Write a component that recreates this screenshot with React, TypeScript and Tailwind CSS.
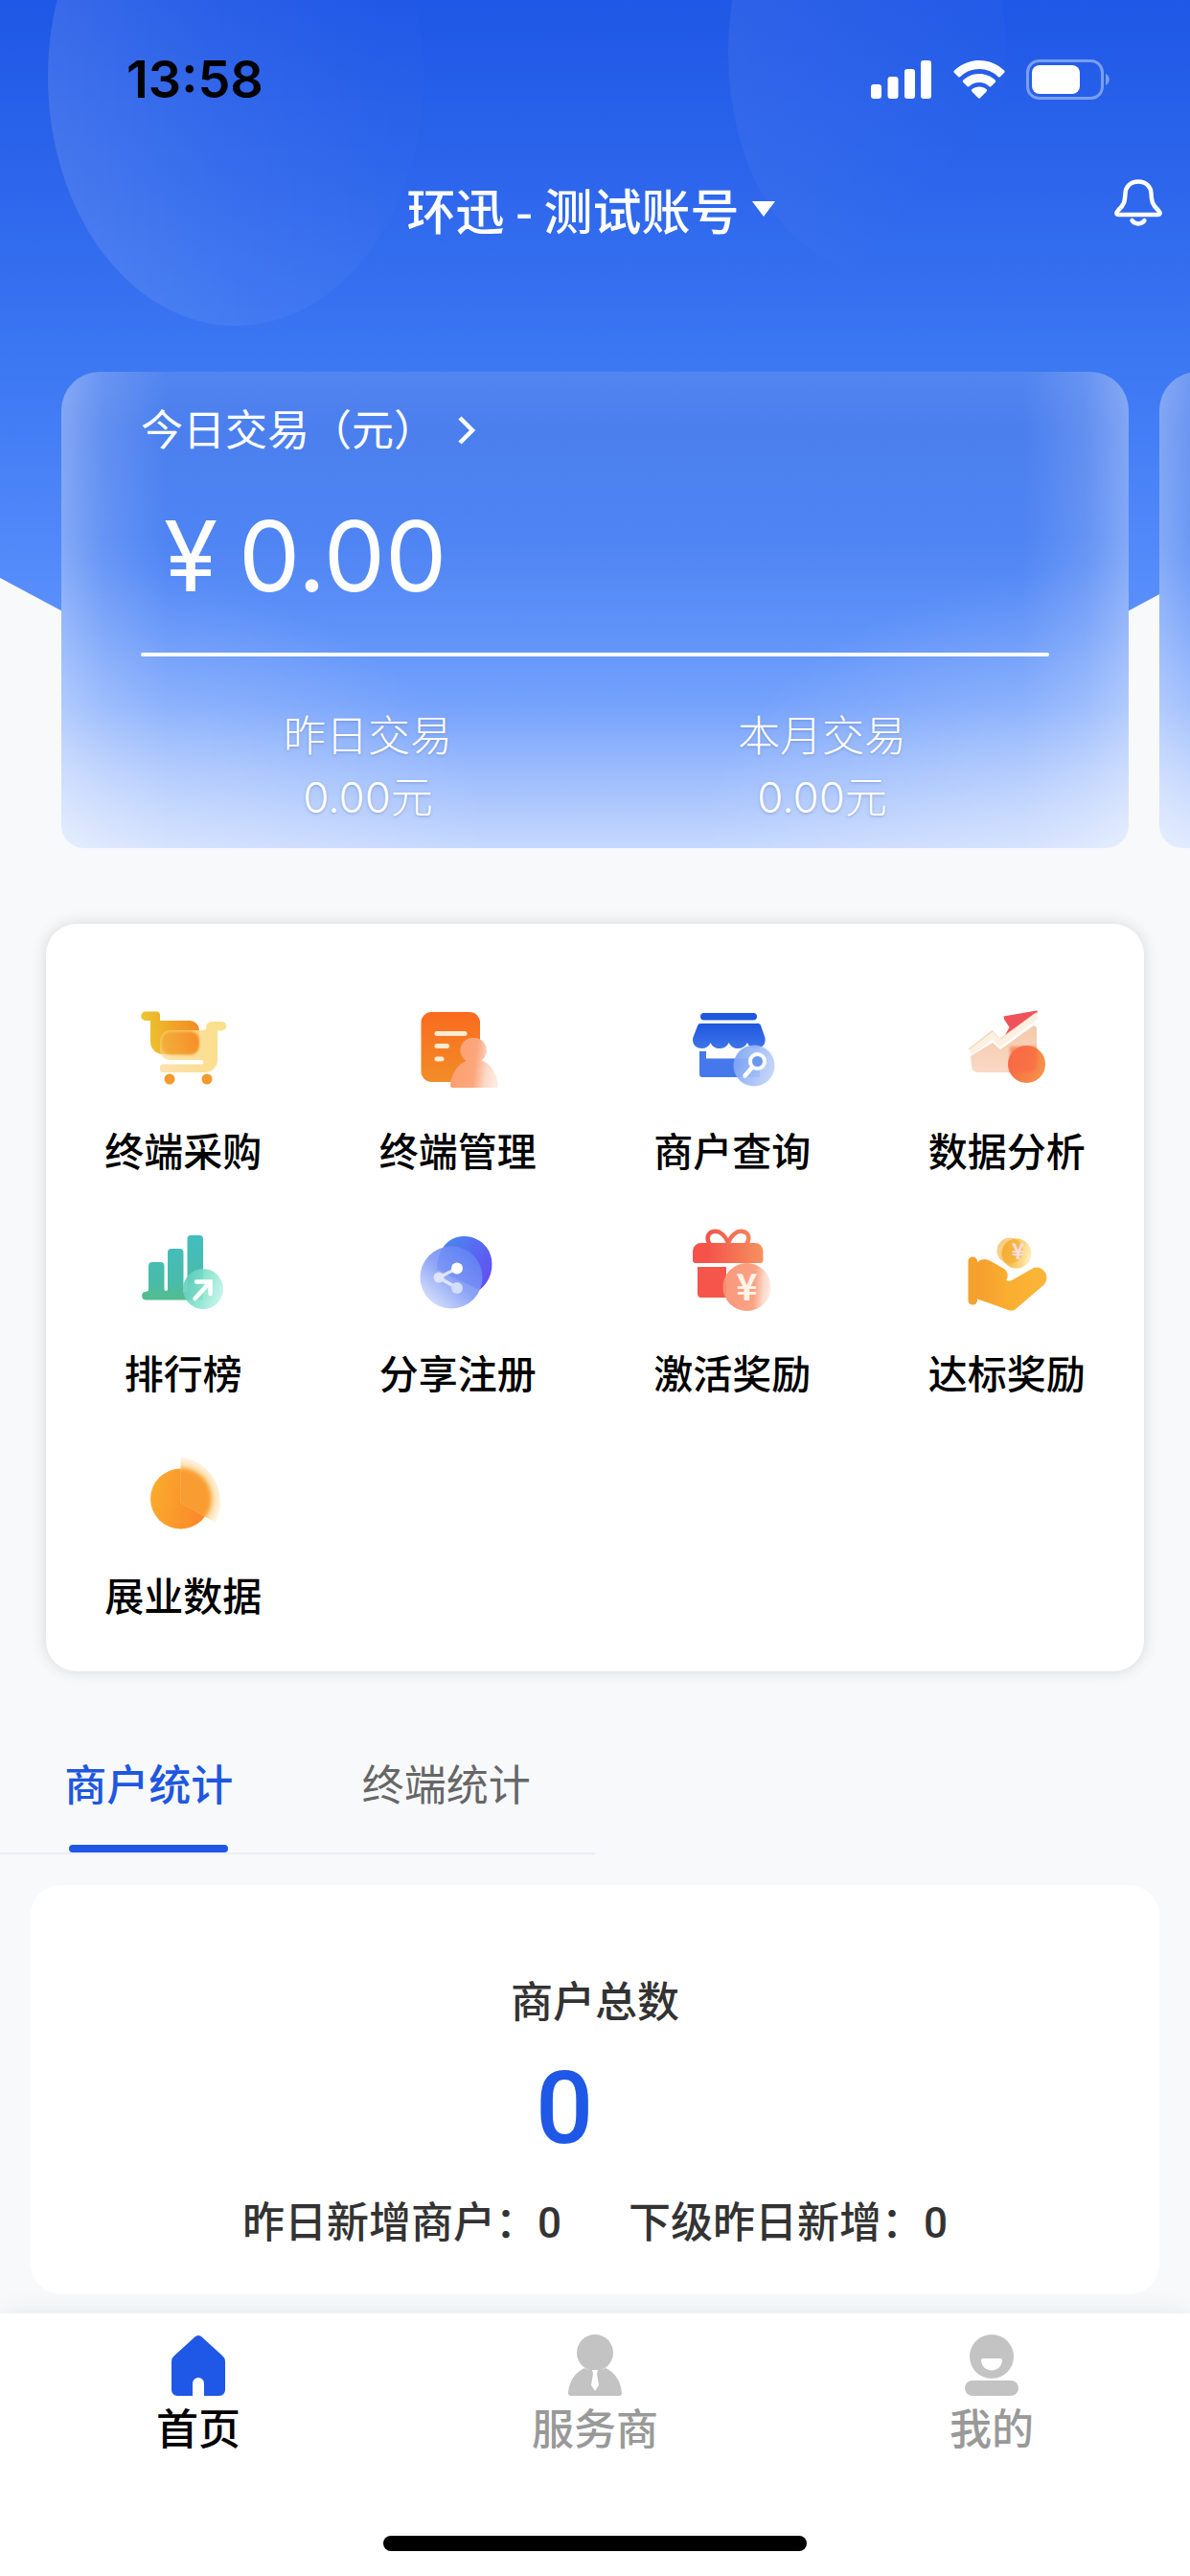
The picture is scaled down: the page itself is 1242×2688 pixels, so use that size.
import React from 'react'

function CartIcon() {
  return (
    <svg width="100" height="100" viewBox="0 0 100 100" fill="none" aria-hidden>
      <defs>
        <linearGradient id="cart-back" x1="16" y1="40" x2="68" y2="30" gradientUnits="userSpaceOnUse">
          <stop stopColor="#EDC02E" />
          <stop offset="1" stopColor="#F48A22" />
        </linearGradient>
        <linearGradient id="cart-front" x1="26" y1="40" x2="86" y2="40" gradientUnits="userSpaceOnUse">
          <stop stopColor="#FBD07A" stopOpacity="0.6" />
          <stop offset="1" stopColor="#FBDF8E" />
        </linearGradient>
        <linearGradient id="cart-blob" x1="28" y1="45" x2="66" y2="38" gradientUnits="userSpaceOnUse">
          <stop stopColor="#F3AE3A" />
          <stop offset="1" stopColor="#F68F28" />
        </linearGradient>
        <filter id="cart-blur" x="-20%" y="-20%" width="140%" height="140%">
          <feGaussianBlur stdDeviation="1.3" />
        </filter>
      </defs>
      <path d="M11 10.5h11a4 4 0 0 1 4 4V20h31a10 10 0 0 1 10 10v10a15 15 0 0 1-15 15H29a13 13 0 0 1-13-13V20h-5a4.7 4.7 0 0 1 0-9.500z" fill="url(#cart-back)" />
      <path d="M37 30h29.500c1 0 6.500 0 7.500-1v-2a6 6 0 0 1 6-6h10.500a4.700 4.700 0 0 1 0 9.500H86V61a13 13 0 0 1-13 13H28a3 3 0 0 1-2-2v-4a3 3 0 0 1 2-2.500h42a2.500 2.500 0 0 0 0-4.500H37A11 11 0 0 1 26 49v-8a11 11 0 0 1 11-11z" fill="url(#cart-front)" />
      <rect x="28" y="31.500" width="39" height="24" rx="9" fill="url(#cart-blob)" filter="url(#cart-blur)" />
      <circle cx="36" cy="81" r="5.500" fill="#F39A2C" />
      <circle cx="75" cy="81" r="5.500" fill="#F39A2C" />
    </svg>
  )
}

function TerminalIcon() {
  return (
    <svg width="100" height="100" viewBox="0 0 100 100" fill="none" aria-hidden>
      <defs>
        <linearGradient id="doc-fill" x1="42" y1="11" x2="42" y2="84" gradientUnits="userSpaceOnUse">
          <stop stopColor="#FA6B1E" />
          <stop offset="1" stopColor="#F18D28" />
        </linearGradient>
        <linearGradient id="doc-person" x1="42" y1="70" x2="92" y2="76" gradientUnits="userSpaceOnUse">
          <stop stopColor="#FDA070" />
          <stop offset="0.500" stopColor="#FCA67C" />
          <stop offset="0.750" stopColor="#FCD9C8" />
          <stop offset="1" stopColor="#FDEDE6" />
        </linearGradient>
      </defs>
      <rect x="11.500" y="11" width="61.500" height="73" rx="11" fill="url(#doc-fill)" />
      <path d="M28 33.500h29M28 46.500h10.500M28 60h5" stroke="#FFEBD2" strokeWidth="5" strokeLinecap="round" />
      <path d="M66.500 38a13 13 0 0 1 8 23.500C84 64 91 76 92 88a2 2 0 0 1-2 2H44a2 2 0 0 1-2-2c1-12 7-22 16.500-26A13 13 0 0 1 66.500 38z" fill="url(#doc-person)" />
    </svg>
  )
}

function StoreIcon() {
  return (
    <svg width="100" height="100" viewBox="0 0 100 100" fill="none" aria-hidden>
      <defs>
        <linearGradient id="store-awning" x1="46" y1="23" x2="46" y2="50" gradientUnits="userSpaceOnUse">
          <stop stopColor="#1F57DE" />
          <stop offset="1" stopColor="#3F75EA" />
        </linearGradient>
        <linearGradient id="store-lens" x1="52" y1="60" x2="95" y2="75" gradientUnits="userSpaceOnUse">
          <stop stopColor="#7FA6F4" />
          <stop offset="1" stopColor="#C3D4FA" />
        </linearGradient>
      </defs>
      <rect x="17" y="12" width="59" height="7.500" rx="3.700" fill="#1F57DE" />
      <path d="M17 23h60.500a3 3 0 0 1 2.500 2l4.500 13c1 7-3 11-9 11-4 0-8-2-9.500-6-2 4-5.500 6-9.500 6s-8-2-9.800-6c-2 4-5 6-9.500 6s-8-2-9.500-6c-2 4-5 6-9.500 6-6 0-10-4-9-11l5-13a3 3 0 0 1 2.800-2z" fill="url(#store-awning)" />
      <path d="M16 52h7v7.500h56V79H19a3 3 0 0 1-3-3z" fill="#4579EB" />
      <circle cx="73" cy="67" r="21.500" fill="url(#store-lens)" fillOpacity="0.920" />
      <circle cx="76.500" cy="62.500" r="7.500" stroke="#fff" strokeWidth="4" fill="#6C97F0" />
      <path d="M70 70l-6.500 7.500" stroke="#fff" strokeWidth="4.500" strokeLinecap="round" />
    </svg>
  )
}

function AnalysisIcon() {
  return (
    <svg width="100" height="100" viewBox="0 0 100 100" fill="none" aria-hidden>
      <defs>
        <linearGradient id="trend-body" x1="46" y1="25" x2="46" y2="74" gradientUnits="userSpaceOnUse">
          <stop stopColor="#F3C9A8" />
          <stop offset="1" stopColor="#FBD8C6" />
        </linearGradient>
        <linearGradient id="trend-dot" x1="52" y1="60" x2="90" y2="72" gradientUnits="userSpaceOnUse">
          <stop stopColor="#F9693F" />
          <stop offset="1" stopColor="#F5934A" />
        </linearGradient>
        <filter id="trend-blur" x="-20%" y="-20%" width="140%" height="140%">
          <feGaussianBlur stdDeviation="1.500" />
        </filter>
      </defs>
      <path d="M12 57l23-14 8 7 35-25 3 2v42a5 5 0 0 1-5 5H19a7 7 0 0 1-6-6z" fill="url(#trend-body)" />
      <path d="M46.500 15.500L81 9.500c1 0 1 2 0 3L46 38.500 52.500 27 47 18.500z" fill="#F0525A" />
      <path d="M10.500 50L34.500 31l8 9L81 12" stroke="#F6D9BF" strokeWidth="2" />
      <path d="M12 53L35 35.500l8 8.500 38-29" stroke="#FCF0E0" strokeWidth="6" />
      <circle cx="70.500" cy="65.500" r="19.500" fill="url(#trend-dot)" />
      <path d="M53 47h28v20a7 7 0 0 1-7 7H53z" fill="#F96A46" fillOpacity="0.650" filter="url(#trend-blur)" />
    </svg>
  )
}

function RankIcon() {
  return (
    <svg width="100" height="100" viewBox="0 0 100 100" fill="none" aria-hidden>
      <defs>
        <linearGradient id="rank-bars" x1="40" y1="12" x2="40" y2="80" gradientUnits="userSpaceOnUse">
          <stop stopColor="#41BEBF" />
          <stop offset="0.700" stopColor="#49BBAA" />
          <stop offset="1" stopColor="#52BE8C" />
        </linearGradient>
        <linearGradient id="rank-dot" x1="50" y1="60" x2="92" y2="75" gradientUnits="userSpaceOnUse">
          <stop stopColor="#5FCDB9" />
          <stop offset="0.500" stopColor="#86E2CE" />
          <stop offset="1" stopColor="#C4F5EA" />
        </linearGradient>
      </defs>
      <path d="M14 44a4 4 0 0 1 4-4h8.500a4 4 0 0 1 4 4v25a2 2 0 0 0 3.500 0V30a4 4 0 0 1 4-4h8.500a4 4 0 0 1 4 4v41h4V16a4 4 0 0 1 4-4H67a4 4 0 0 1 4 4v63.500H11.500a4.300 4.300 0 0 1-1-8.500L14 70z" fill="url(#rank-bars)" />
      <circle cx="71" cy="68" r="21" fill="url(#rank-dot)" fillOpacity="0.900" />
      <path d="M62.500 78L78 61M64 60.500h14.500V73" stroke="#fff" strokeWidth="4.500" strokeLinecap="round" />
    </svg>
  )
}

function ShareIcon() {
  return (
    <svg width="100" height="100" viewBox="0 0 100 100" fill="none" aria-hidden>
      <defs>
        <linearGradient id="share-back" x1="35" y1="20" x2="84" y2="55" gradientUnits="userSpaceOnUse">
          <stop stopColor="#4A86F0" />
          <stop offset="1" stopColor="#6350F2" />
        </linearGradient>
        <linearGradient id="share-front" x1="62" y1="34" x2="20" y2="80" gradientUnits="userSpaceOnUse">
          <stop stopColor="#6686F5" />
          <stop offset="0.450" stopColor="#7E98F5" />
          <stop offset="1" stopColor="#CCD7FA" />
        </linearGradient>
      </defs>
      <path d="M56 13c17 0 29.500 13 29.500 29 0 12-5 20-13 27L28 48c0-20 11-35 28-35z" fill="url(#share-back)" />
      <circle cx="43" cy="56" r="32.500" fill="url(#share-front)" fillOpacity="0.900" />
      <path d="M49 46.500L30 56l19 11" stroke="#DCE5FD" strokeWidth="3.500" />
      <circle cx="49" cy="46.500" r="6" fill="#fff" />
      <circle cx="30" cy="56" r="5.500" fill="#DCE5FD" />
      <circle cx="49" cy="67" r="6" fill="#D3DDFC" />
    </svg>
  )
}

function GiftIcon() {
  return (
    <svg width="100" height="100" viewBox="0 0 100 100" fill="none" aria-hidden>
      <defs>
        <linearGradient id="gift-lid" x1="9" y1="30" x2="83" y2="30" gradientUnits="userSpaceOnUse">
          <stop offset="0.200" stopColor="#F5524A" />
          <stop offset="1" stopColor="#F5935F" />
        </linearGradient>
        <linearGradient id="gift-coin" x1="40" y1="66" x2="91" y2="70" gradientUnits="userSpaceOnUse">
          <stop stopColor="#FA9273" />
          <stop offset="0.650" stopColor="#F99C7C" />
          <stop offset="0.850" stopColor="#FCD9C9" />
          <stop offset="1" stopColor="#FDEEE8" />
        </linearGradient>
      </defs>
      <path d="M46 20C43 12 37 7 31 8c-7 1-8 9-4 13M46 20c3-8 9-13 15-12 7 1 8 8 4 13" stroke="url(#gift-lid)" strokeWidth="4.500" />
      <path d="M17 20h57a8.500 8.500 0 0 1 8.500 8.500V38a3 3 0 0 1-3 3h-67.500a3 3 0 0 1-3-3v-9.500a8.500 8.500 0 0 1 8-8.500z" fill="url(#gift-lid)" />
      <path d="M14 45h30v32H18a4 4 0 0 1-4-4z" fill="#F5554A" />
      <circle cx="65.500" cy="66" r="25" fill="url(#gift-coin)" fillOpacity="0.940" />
      <text x="65.500" y="80" textAnchor="middle" fontSize="38" fontWeight="700" fill="#FFF3E8" className="font-['Noto_Sans_CJK_SC',sans-serif]">¥</text>
    </svg>
  )
}

function HandIcon() {
  return (
    <svg width="100" height="100" viewBox="0 0 100 100" fill="none" aria-hidden>
      <defs>
        <linearGradient id="hand-fill" x1="10" y1="60" x2="92" y2="60" gradientUnits="userSpaceOnUse">
          <stop stopColor="#F29A2E" />
          <stop offset="0.500" stopColor="#FBAE30" />
          <stop offset="1" stopColor="#F9B63A" />
        </linearGradient>
        <linearGradient id="hand-coin" x1="39" y1="28" x2="76" y2="34" gradientUnits="userSpaceOnUse">
          <stop stopColor="#F3A42C" />
          <stop offset="0.500" stopColor="#F8C453" />
          <stop offset="1" stopColor="#FDF0C8" />
        </linearGradient>
      </defs>
      <rect x="9.500" y="34.500" width="9.500" height="50" rx="4.500" fill="#F3A22E" />
      <path d="M18 41c5-5 10-5 15-2l14 8c4 3 5 8 2 12 2 1 4 1 6 0l21-12c5-3 11-1 14 4s1 11-3 14L59 89c-3 2-6 2-10 0L18 78z" fill="url(#hand-fill)" />
      <circle cx="60" cy="31" r="15.500" fill="url(#hand-coin)" />
      <circle cx="53" cy="28" r="13.500" fill="#F3AE33" fillOpacity="0.600" />
      <text x="61.500" y="37" textAnchor="middle" fontSize="23" fontWeight="700" fill="#FBDDE0" className="font-['Noto_Sans_CJK_SC',sans-serif]">¥</text>
    </svg>
  )
}

function PieIcon() {
  return (
    <svg width="100" height="100" viewBox="0 0 100 100" fill="none" aria-hidden>
      <defs>
        <linearGradient id="pie-fill" x1="16" y1="50" x2="70" y2="60" gradientUnits="userSpaceOnUse">
          <stop stopColor="#FAAB2D" />
          <stop offset="1" stopColor="#FB8A2A" />
        </linearGradient>
        <clipPath id="pie-slice">
          <path d="M47.500 59V11a48 48 0 0 1 36.500 69z" />
        </clipPath>
        <filter id="pie-blur" x="-20%" y="-20%" width="140%" height="140%">
          <feGaussianBlur stdDeviation="2" />
        </filter>
        <radialGradient id="pie-glow" cx="47.500" cy="55" r="44" gradientUnits="userSpaceOnUse">
          <stop offset="0.680" stopColor="#FBD590" />
          <stop offset="1" stopColor="#FEFAF0" />
        </radialGradient>
      </defs>
      <circle cx="47.500" cy="55" r="31.500" fill="url(#pie-fill)" />
      <g clipPath="url(#pie-slice)">
        <rect width="100" height="100" fill="url(#pie-glow)" />
        <circle cx="47.500" cy="55" r="32" fill="#F99D30" filter="url(#pie-blur)" />
      </g>
    </svg>
  )
}

const menu = [
  { label: '终端采购', icon: CartIcon },
  { label: '终端管理', icon: TerminalIcon },
  { label: '商户查询', icon: StoreIcon },
  { label: '数据分析', icon: AnalysisIcon },
  { label: '排行榜', icon: RankIcon },
  { label: '分享注册', icon: ShareIcon },
  { label: '激活奖励', icon: GiftIcon },
  { label: '达标奖励', icon: HandIcon },
  { label: '展业数据', icon: PieIcon },
]

const totals = [
  { label: '昨日交易', value: '0.00元' },
  { label: '本月交易', value: '0.00元' },
]

function HeaderBackground() {
  return (
    <svg
      className="absolute inset-x-0 top-0 w-full h-[800px]"
      viewBox="0 0 1242 800"
      preserveAspectRatio="none"
      aria-hidden
    >
      <defs>
        <linearGradient id="head" x1="0" y1="0" x2="0" y2="1">
          <stop stopColor="#1F57E6" />
          <stop offset="0.250" stopColor="#2E67EC" />
          <stop offset="0.500" stopColor="#3F7AF4" />
          <stop offset="0.780" stopColor="#598FFC" />
          <stop offset="1" stopColor="#6A9BFD" />
        </linearGradient>
        <linearGradient id="bubble" x1="0" y1="0.600" x2="0.900" y2="0.450">
          <stop stopColor="#fff" stopOpacity="0.120" />
          <stop offset="0.500" stopColor="#fff" stopOpacity="0.050" />
          <stop offset="1" stopColor="#fff" stopOpacity="0.010" />
        </linearGradient>
        <linearGradient id="bubble-faint" x1="0" y1="0.300" x2="0.500" y2="1">
          <stop stopColor="#fff" stopOpacity="0.070" />
          <stop offset="1" stopColor="#fff" stopOpacity="0" />
        </linearGradient>
      </defs>
      <path d="M0 0h1242v603L930 770Q621 860 312 770L0 603z" fill="url(#head)" />
      <ellipse cx="246" cy="80" rx="196" ry="260" fill="url(#bubble)" />
      <ellipse cx="905" cy="55" rx="145" ry="225" fill="url(#bubble-faint)" />
    </svg>
  )
}

function StatusBar() {
  return (
    <div className="flex h-[166px] items-center justify-between pl-[132px] pr-[83px]">
      <span className="text-[54px] font-semibold leading-none text-black">13:58</span>
      <div className="flex items-center gap-[22px]">
        <svg width="64" height="42" viewBox="0 0 64 42" fill="#fff" aria-hidden>
          <rect x="0" y="26" width="11" height="15" rx="3" />
          <rect x="17.500" y="18" width="11" height="23" rx="3" />
          <rect x="35" y="10" width="11" height="31" rx="3" />
          <rect x="52" y="1" width="11" height="40" rx="3" />
        </svg>
        <svg width="54" height="42" viewBox="0 0 54 42" fill="#fff" aria-hidden>
          <path d="M27 1c10 0 19 4 26 10.500.8.800.8 1.600 0 2.400L49 18c-.8.700-1.500.7-2.300 0A29 29 0 0 0 27 10 29 29 0 0 0 7.300 18c-.8.700-1.500.7-2.300 0L1 13.900c-.8-.8-.8-1.600 0-2.400C8 5 17 1 27 1z" />
          <path d="M27 15c6 0 12 2.300 16.600 6.600.8.800.8 1.600 0 2.400l-4 4c-.8.800-1.500.8-2.300.1A15 15 0 0 0 27 24a15 15 0 0 0-10.300 4.100c-.8.700-1.500.7-2.300-.1l-4-4c-.8-.8-.8-1.600 0-2.400C15 17.300 21 15 27 15z" />
          <path d="M27 28.500c3 0 5.500 1 7.600 2.700.8.700.8 1.500 0 2.300L28.200 40c-.8.800-1.600.8-2.400 0l-6.400-6.500c-.8-.8-.8-1.600 0-2.300A12 12 0 0 1 27 28.500z" />
        </svg>
        <svg width="88" height="42" viewBox="0 0 88 42" fill="none" aria-hidden>
          <rect x="1.500" y="1.500" width="78" height="39" rx="12" stroke="#fff" strokeOpacity="0.400" strokeWidth="3" />
          <rect x="6" y="6" width="50" height="30" rx="8" fill="#fff" />
          <path d="M83 15c5 2 5 10 0 12z" fill="#fff" fillOpacity="0.400" />
        </svg>
      </div>
    </div>
  )
}

function GlassCard({ children }: { children?: React.ReactNode }) {
  return (
    <div
      className="w-[calc(100%-64px)] shrink-0 rounded-t-[40px] rounded-b-3xl px-[83px] pt-[31px] pb-[21px] text-white bg-[radial-gradient(ellipse_40%_60%_at_0%_100%,rgba(255,255,255,0.38),transparent),radial-gradient(ellipse_40%_60%_at_100%_100%,rgba(255,255,255,0.38),transparent),linear-gradient(90deg,rgba(255,255,255,0.3),rgba(255,255,255,0.13)_4%,transparent_10%,transparent_90%,rgba(255,255,255,0.13)_96%,rgba(255,255,255,0.3)),linear-gradient(180deg,#5285f0_0%,#4b7fee_12%,#4e84f3_35%,#6093f9_55%,#75a2fc_70%,#9cbcfd_84%,#c6d8fe_100%)]"
    >
      {children}
    </div>
  )
}

export default function App() {
  const [tab, setTab] = React.useState('商户统计')

  return (
    <div className="relative flex min-h-screen flex-col overflow-hidden bg-[#f7f9fb] font-['Inter','Noto_Sans_CJK_SC',sans-serif]">
      <HeaderBackground />

      <header className="relative">
        <StatusBar />
        <div className="grid h-[104px] grid-cols-[1fr_auto_1fr] items-center pl-[20px] pr-[28px] text-white">
          <button className="col-start-2 flex items-center gap-3 font-['Noto_Sans_CJK_SC',sans-serif] text-[51px] font-medium leading-[60px]">
            环迅 - 测试账号
            <svg width="26" height="18" viewBox="0 0 26 18" fill="#fff" aria-hidden>
              <path d="M1 1h24L13 17z" />
            </svg>
          </button>
          <button aria-label="消息" className="justify-self-end">
            <svg width="52" height="62" viewBox="0 0 52 62" fill="none" stroke="#fff" strokeWidth="4.500" aria-hidden>
              <path d="M26 2.500c-8 0-13 5-13.500 12-.5 9-1 12-7.500 18-2.500 2.500-2 4.500 1 4.500h40c3 0 3.500-2 1-4.500-6.500-6-7-9-7.500-18-.5-7-5.500-12-13.500-12z" strokeLinejoin="round" />
              <path d="M19.500 43c3 4.500 10 4.500 13 0" strokeLinecap="round" />
            </svg>
          </button>
        </div>
      </header>

      <section className="relative mt-[118px] flex gap-8 pl-16">
        <GlassCard>
          <a href="#trade" className="flex items-center gap-[22px] leading-[60px]">
            <span className="text-[44px]">今日交易（元）</span>
            <svg width="22" height="34" viewBox="0 0 22 34" fill="none" aria-hidden>
              <path d="M3 4l13 13L3 30" stroke="#fff" strokeWidth="4.500" />
            </svg>
          </a>
          <div className="mt-[41px] flex gap-[22px] pl-6 text-[102px] leading-[120px]">
            <span>¥</span>
            <span>0.00</span>
          </div>
          <div className="mt-[41px] h-1 rounded-full bg-white" />
          <div className="mt-[51px] grid grid-cols-2 text-center text-[44px] font-light leading-[64px] [text-shadow:0_1px_3px_rgba(110,130,180,0.6)]">
            {totals.map((item) => (
              <div key={item.label}>
                <div>{item.label}</div>
                <div>{item.value}</div>
              </div>
            ))}
          </div>
        </GlassCard>
        <GlassCard />
      </section>

      <nav className="relative mx-12 mt-[79px] grid grid-cols-4 gap-y-[45px] rounded-[32px] bg-white pt-[81px] pb-12 shadow-[0_0_16px_rgba(0,0,0,0.14)]">
        {menu.map(({ label, icon: Icon }) => (
          <a key={label} href="#menu" className="flex flex-col items-center">
            <Icon />
            <span className="mt-[27px] text-[41px] font-medium leading-[60px] text-black">{label}</span>
          </a>
        ))}
      </nav>

      <div role="tablist" className="mt-[89px] grid w-1/2 grid-cols-2 border-b-2 border-[#eceef2]">
        {['商户统计', '终端统计'].map((name) => (
          <button
            key={name}
            role="tab"
            aria-selected={tab === name}
            onClick={() => setTab(name)}
            className={
              tab === name
                ? 'flex flex-col items-center text-[44px] font-medium leading-[60px] text-[#1f57e0]'
                : 'flex flex-col items-center text-[44px] leading-[60px] text-[#666666]'
            }
          >
            {name}
            <span className={tab === name ? 'mt-[32px] h-2 w-[166px] rounded-full bg-[#1f57e6]' : 'mt-[32px] h-2'} />
          </button>
        ))}
      </div>

      <section className="mx-8 mt-8 mb-5 rounded-[32px] bg-white pt-[92px] pb-[45px] text-center text-[44px] font-medium leading-[60px] text-[#333333]">
        <h2>商户总数</h2>
        <div className="mt-[21px] pr-16 font-['Roboto',sans-serif] text-[106px] leading-[120px] text-[#1f57e6]">0</div>
        <div className="mt-[29px] flex justify-center gap-[70px]">
          <p>昨日新增商户：<span className="font-['Roboto',sans-serif] leading-none">0</span></p>
          <p>下级昨日新增：<span className="font-['Roboto',sans-serif] leading-none">0</span></p>
        </div>
      </section>

      <footer className="relative mt-auto bg-white pt-[22px] pb-[26px] shadow-[0_0_24px_rgba(0,0,0,0.08)]">
        <div className="grid grid-cols-3 text-[44px] font-medium leading-[60px] text-[#999999]">
          <a href="#home" className="flex flex-col items-center gap-[5px] text-black">
            <svg width="64" height="64" viewBox="0 0 64 64" fill="#1f57e6" aria-hidden>
              <path d="M29 2a5 5 0 0 1 6 0l22 20a8 8 0 0 1 3 6v30a6 6 0 0 1-6 6H38V51a6 6 0 0 0-12 0v13H10a6 6 0 0 1-6-6V28a8 8 0 0 1 3-6z" />
            </svg>
            首页
          </a>
          <a href="#agent" className="flex flex-col items-center gap-[5px]">
            <svg width="64" height="64" viewBox="0 0 64 64" aria-hidden>
              <circle cx="32" cy="19" r="19" fill="#c3c3c3" />
              <path d="M21 35c3 3 19 3 22 0 9 4 16 13 17 26a3 3 0 0 1-3 3H7a3 3 0 0 1-3-3c1-13 8-22 17-26z" fill="#c3c3c3" />
              <path d="M29 37h6l-1 4 2 12-4 6-4-6 2-12z" fill="#fff" />
            </svg>
            服务商
          </a>
          <a href="#mine" className="flex flex-col items-center gap-[5px]">
            <svg width="64" height="64" viewBox="0 0 64 64" aria-hidden>
              <circle cx="32" cy="23" r="23" fill="#c3c3c3" />
              <path d="M23 25h18a2 2 0 0 1 2 2c-1 14-21 14-22 0a2 2 0 0 1 2-2z" fill="#fff" />
              <rect x="4" y="48" width="56" height="16" rx="8" fill="#c3c3c3" />
            </svg>
            我的
          </a>
        </div>
        <div className="mx-auto mt-[81px] h-4 w-[442px] rounded-full bg-black" />
      </footer>
    </div>
  )
}
